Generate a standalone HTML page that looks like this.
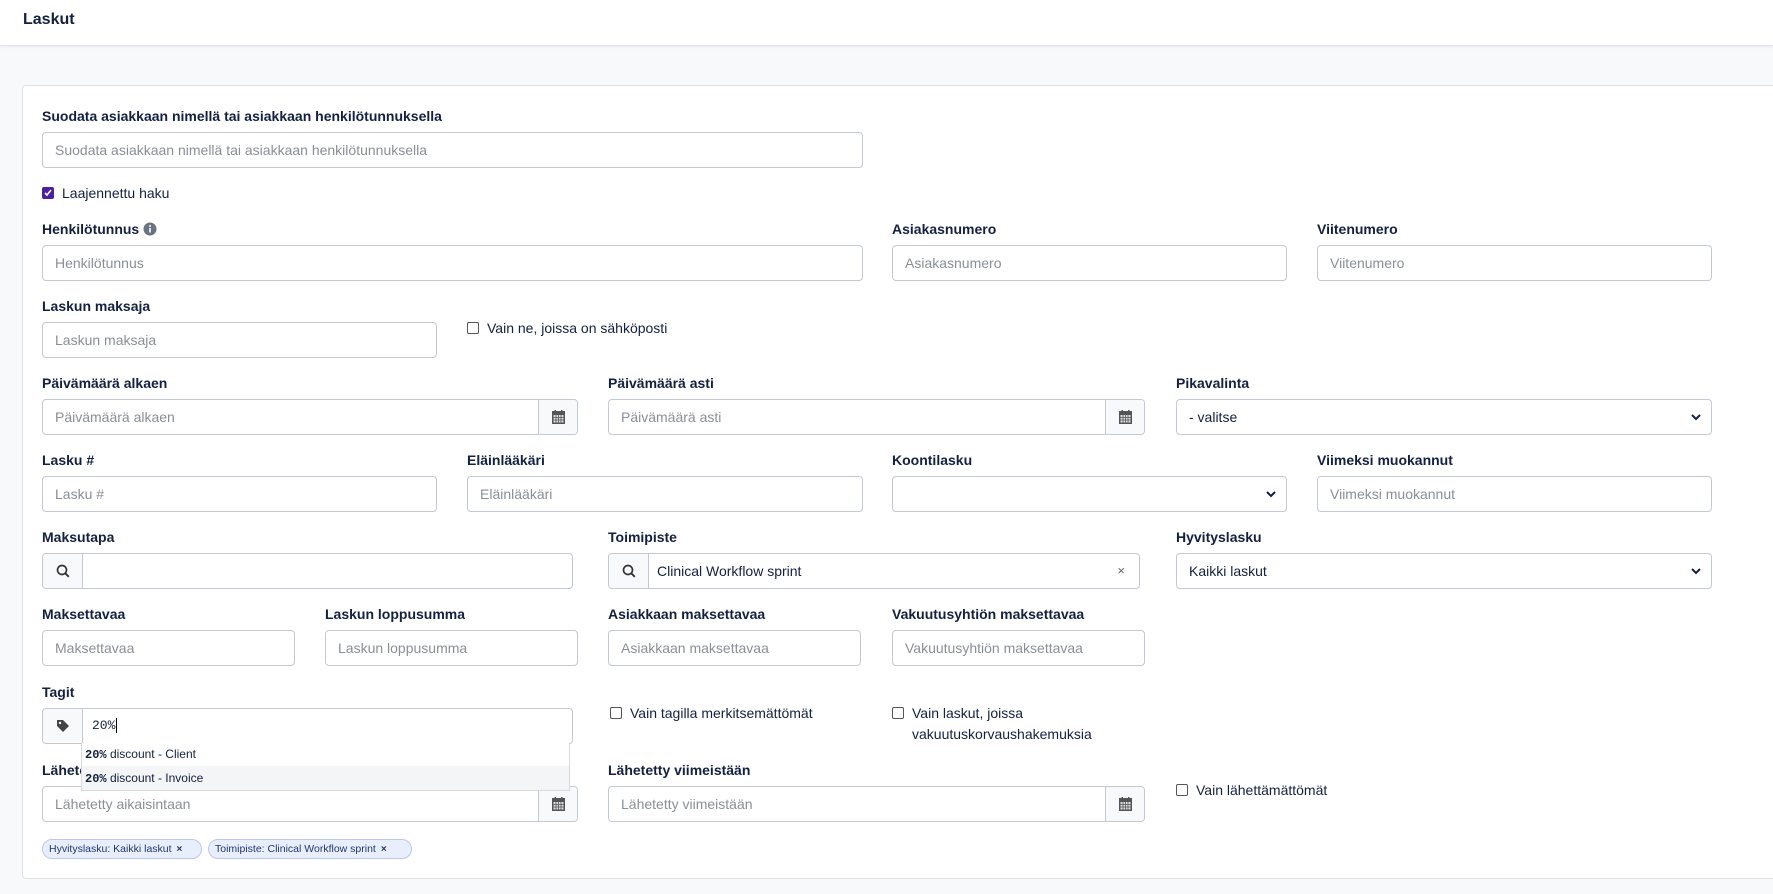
<!DOCTYPE html>
<html><head><meta charset="utf-8"><style>
*{box-sizing:border-box;margin:0;padding:0}
body{width:1773px;height:894px;background:#f8f9fa;font-family:"Liberation Sans",sans-serif;color:#13203f;position:relative;overflow:hidden}
.hdr{position:absolute;left:0;top:0;width:1773px;height:46px;background:#fff;border-bottom:1px solid #dfe2e6;box-shadow:0 1px 3px rgba(0,0,0,.06)}
.hdr span{position:absolute;left:23px;top:11px;font-size:16px;font-weight:600}
.card{position:absolute;left:22px;top:85px;width:1780px;height:794px;background:#fff;border:1px solid #dde1e6;border-radius:4px}
.l{position:absolute;font-size:14px;font-weight:700;color:#13203f;white-space:nowrap}
.i{position:absolute;height:36px;border:1px solid #c3c9d2;border-radius:4px;background:#fff;font-size:14px;color:#8a8f96;padding:0 12px;line-height:34px;white-space:nowrap;overflow:hidden}
.i.v{color:#13203f}
.cal{position:absolute;right:0;top:0;width:39px;height:34px;border-left:1px solid #c3c9d2;background:#f8f9fa}
.cal svg{position:absolute;left:13px;top:10px}
.add{position:absolute;left:0;top:0;width:40px;height:34px;border-right:1px solid #c3c9d2;background:#f8f9fa}
.add svg{position:absolute;left:13px;top:10px}
.chev{position:absolute;right:10px;top:13px}
.cb{position:absolute;font-size:14px;color:#13203f;white-space:nowrap;line-height:21px}
.cb i{display:inline-block;width:12px;height:12px;border:1px solid #555;border-radius:2px;vertical-align:-1px;margin-right:8px;background:#fff}
.chip{position:absolute;top:839px;height:20px;border:1px solid #b9c8ef;background:#e8eefc;border-radius:10px;font-size:10.5px;color:#22366e;line-height:18px;padding:0 6px;white-space:nowrap}
.chip b{margin-left:5px;font-size:10px}
</style></head><body>
<div class="hdr"><span>Laskut</span></div>
<div class="card"></div>

<div class="l" style="left:42px;top:108px">Suodata asiakkaan nimellä tai asiakkaan henkilötunnuksella</div>
<div class="i" style="left:42px;top:132px;width:821px">Suodata asiakkaan nimellä tai asiakkaan henkilötunnuksella</div>

<div class="cb" style="left:42px;top:183px"><i style="background:#4b1fa0;border-color:#4b1fa0;position:relative"><svg width="10" height="10" viewBox="0 0 10 10" style="position:absolute;left:0;top:0"><path d="M2 5l2 2 4-5" stroke="#fff" stroke-width="1.6" fill="none"/></svg></i>Laajennettu haku</div>

<div class="l" style="left:42px;top:221px">Henkilötunnus <svg width="14" height="14" viewBox="0 0 14 14" style="vertical-align:-2px"><circle cx="7" cy="7" r="6.5" fill="#6b7380"/><rect x="6.2" y="6" width="1.6" height="4.5" fill="#fff"/><circle cx="7" cy="4" r="1" fill="#fff"/></svg></div>
<div class="i" style="left:42px;top:245px;width:821px">Henkilötunnus</div>
<div class="l" style="left:892px;top:221px">Asiakasnumero</div>
<div class="i" style="left:892px;top:245px;width:395px">Asiakasnumero</div>
<div class="l" style="left:1317px;top:221px">Viitenumero</div>
<div class="i" style="left:1317px;top:245px;width:395px">Viitenumero</div>

<div class="l" style="left:42px;top:298px">Laskun maksaja</div>
<div class="i" style="left:42px;top:322px;width:395px">Laskun maksaja</div>
<div class="cb" style="left:467px;top:318px"><i></i>Vain ne, joissa on sähköposti</div>

<div class="l" style="left:42px;top:375px">Päivämäärä alkaen</div>
<div class="i" style="left:42px;top:399px;width:536px">Päivämäärä alkaen<div class="cal"><svg width="13" height="14" viewBox="0 0 13 14"><rect x="0" y="1" width="13" height="13" fill="#555"/><rect x="1.5" y="5" width="10" height="7.5" fill="#ddd"/><path d="M1.5 7.5h10M1.5 10h10M4 5v7.5M6.5 5v7.5M9 5v7.5" stroke="#555" stroke-width=".8"/><rect x="2.5" y="0" width="1.5" height="3" fill="#555"/><rect x="9" y="0" width="1.5" height="3" fill="#555"/></svg></div></div>
<div class="l" style="left:608px;top:375px">Päivämäärä asti</div>
<div class="i" style="left:608px;top:399px;width:537px">Päivämäärä asti<div class="cal"><svg width="13" height="14" viewBox="0 0 13 14"><rect x="0" y="1" width="13" height="13" fill="#555"/><rect x="1.5" y="5" width="10" height="7.5" fill="#ddd"/><path d="M1.5 7.5h10M1.5 10h10M4 5v7.5M6.5 5v7.5M9 5v7.5" stroke="#555" stroke-width=".8"/><rect x="2.5" y="0" width="1.5" height="3" fill="#555"/><rect x="9" y="0" width="1.5" height="3" fill="#555"/></svg></div></div>
<div class="l" style="left:1176px;top:375px">Pikavalinta</div>
<div class="i v" style="left:1176px;top:399px;width:536px">- valitse<svg class="chev" width="10" height="8" viewBox="0 0 10 8"><path d="M1 2l4 4 4-4" stroke="#13203f" stroke-width="2" fill="none"/></svg></div>

<div class="l" style="left:42px;top:452px">Lasku #</div>
<div class="i" style="left:42px;top:476px;width:395px">Lasku #</div>
<div class="l" style="left:467px;top:452px">Eläinlääkäri</div>
<div class="i" style="left:467px;top:476px;width:396px">Eläinlääkäri</div>
<div class="l" style="left:892px;top:452px">Koontilasku</div>
<div class="i" style="left:892px;top:476px;width:395px"><svg class="chev" width="10" height="8" viewBox="0 0 10 8"><path d="M1 2l4 4 4-4" stroke="#13203f" stroke-width="2" fill="none"/></svg></div>
<div class="l" style="left:1317px;top:452px">Viimeksi muokannut</div>
<div class="i" style="left:1317px;top:476px;width:395px">Viimeksi muokannut</div>

<div class="l" style="left:42px;top:529px">Maksutapa</div>
<div class="i" style="left:42px;top:553px;width:531px"><div class="add"><svg width="14" height="14" viewBox="0 0 14 14"><circle cx="6" cy="6" r="4.5" stroke="#333" stroke-width="1.7" fill="none"/><path d="M9.3 9.3l3.5 3.5" stroke="#333" stroke-width="1.9"/></svg></div></div>
<div class="l" style="left:608px;top:529px">Toimipiste</div>
<div class="i v" style="left:608px;top:553px;width:532px;padding-left:48px">Clinical Workflow sprint<div class="add"><svg width="14" height="14" viewBox="0 0 14 14"><circle cx="6" cy="6" r="4.5" stroke="#333" stroke-width="1.7" fill="none"/><path d="M9.3 9.3l3.5 3.5" stroke="#333" stroke-width="1.9"/></svg></div><span style="position:absolute;right:14px;top:0;color:#666;font-size:13px">×</span></div>
<div class="l" style="left:1176px;top:529px">Hyvityslasku</div>
<div class="i v" style="left:1176px;top:553px;width:536px">Kaikki laskut<svg class="chev" width="10" height="8" viewBox="0 0 10 8"><path d="M1 2l4 4 4-4" stroke="#13203f" stroke-width="2" fill="none"/></svg></div>

<div class="l" style="left:42px;top:606px">Maksettavaa</div>
<div class="i" style="left:42px;top:630px;width:253px">Maksettavaa</div>
<div class="l" style="left:325px;top:606px">Laskun loppusumma</div>
<div class="i" style="left:325px;top:630px;width:253px">Laskun loppusumma</div>
<div class="l" style="left:608px;top:606px">Asiakkaan maksettavaa</div>
<div class="i" style="left:608px;top:630px;width:253px">Asiakkaan maksettavaa</div>
<div class="l" style="left:892px;top:606px">Vakuutusyhtiön maksettavaa</div>
<div class="i" style="left:892px;top:630px;width:253px">Vakuutusyhtiön maksettavaa</div>

<div class="l" style="left:42px;top:684px">Tagit</div>
<div class="i v" style="left:42px;top:708px;width:531px;padding-left:49px;font-family:'Liberation Mono',monospace;font-size:13px">20%<span style="border-left:1px solid #000;margin-left:1px"></span><div class="add"><svg width="14" height="14" viewBox="0 0 14 14"><path d="M1 1h6l6 6-6 6-6-6z" fill="#444"/><circle cx="4" cy="4" r="1.2" fill="#f8f9fa"/></svg></div></div>
<div class="cb" style="left:610px;top:703px"><i></i>Vain tagilla merkitsemättömät</div>
<div class="cb" style="left:892px;top:703px"><i></i>Vain laskut, joissa<br><span style="margin-left:20px">vakuutuskorvaushakemuksia</span></div>

<div class="l" style="left:42px;top:762px">Lähetetty aikaisintaan</div>
<div class="i" style="left:42px;top:786px;width:536px">Lähetetty aikaisintaan<div class="cal"><svg width="13" height="14" viewBox="0 0 13 14"><rect x="0" y="1" width="13" height="13" fill="#555"/><rect x="1.5" y="5" width="10" height="7.5" fill="#ddd"/><path d="M1.5 7.5h10M1.5 10h10M4 5v7.5M6.5 5v7.5M9 5v7.5" stroke="#555" stroke-width=".8"/><rect x="2.5" y="0" width="1.5" height="3" fill="#555"/><rect x="9" y="0" width="1.5" height="3" fill="#555"/></svg></div></div>
<div class="l" style="left:608px;top:762px">Lähetetty viimeistään</div>
<div class="i" style="left:608px;top:786px;width:537px">Lähetetty viimeistään<div class="cal"><svg width="13" height="14" viewBox="0 0 13 14"><rect x="0" y="1" width="13" height="13" fill="#555"/><rect x="1.5" y="5" width="10" height="7.5" fill="#ddd"/><path d="M1.5 7.5h10M1.5 10h10M4 5v7.5M6.5 5v7.5M9 5v7.5" stroke="#555" stroke-width=".8"/><rect x="2.5" y="0" width="1.5" height="3" fill="#555"/><rect x="9" y="0" width="1.5" height="3" fill="#555"/></svg></div></div>
<div class="cb" style="left:1176px;top:780px"><i></i>Vain lähettämättömät</div>

<div style="position:absolute;left:81px;top:743px;width:489px;height:48px;background:#fff;border:1px solid #d5d9de;border-top:none;font-size:12px;color:#13203f">
<div style="height:23px;line-height:23px;padding-left:3px"><b style="font-family:'Liberation Mono',monospace">20%</b> discount - Client</div>
<div style="height:24px;line-height:24px;padding-left:3px;background:#f4f5f6"><b style="font-family:'Liberation Mono',monospace">20%</b> discount - Invoice</div>
</div>

<div class="chip" style="left:42px;width:160px">Hyvityslasku: Kaikki laskut<b>×</b></div>
<div class="chip" style="left:208px;width:204px">Toimipiste: Clinical Workflow sprint<b>×</b></div>
</body></html>
